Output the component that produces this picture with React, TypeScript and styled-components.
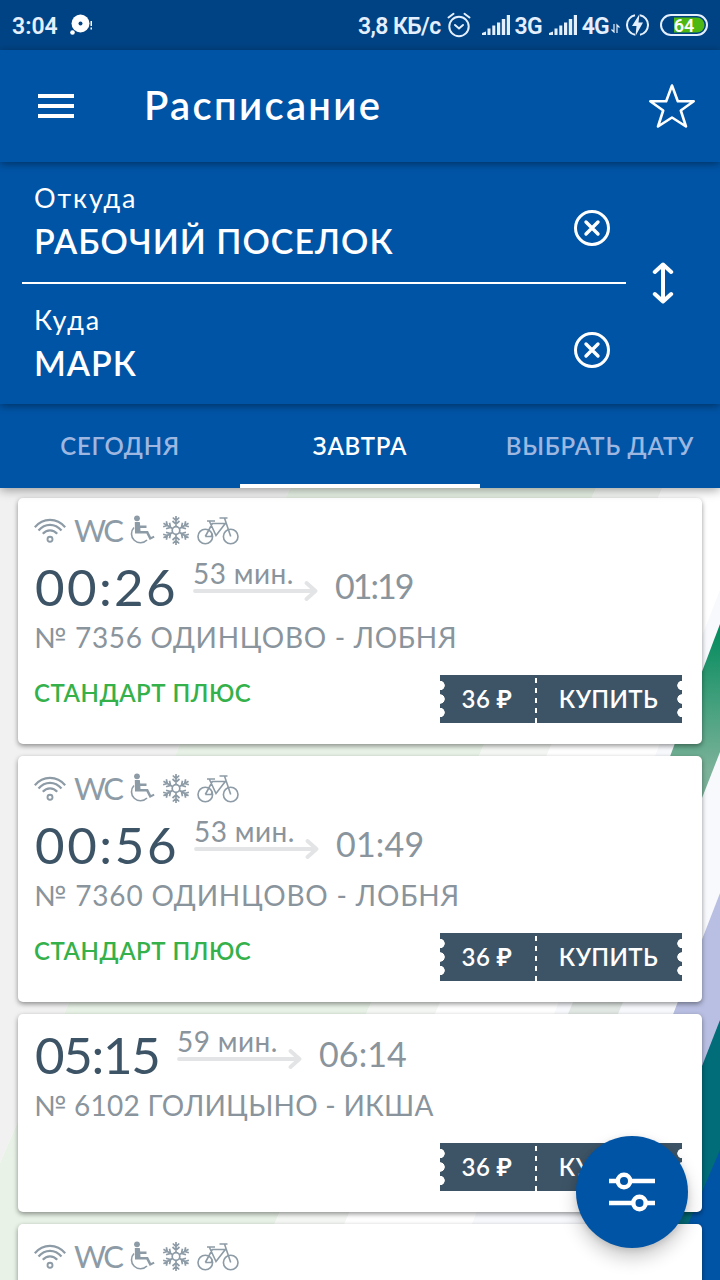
import React from "react";
import styled, { createGlobalStyle } from "styled-components";

const Global = createGlobalStyle`
  * { box-sizing: border-box; }
  html, body, #root { margin: 0; padding: 0; height: 1280px; }
  body { width: 720px; overflow: hidden; font-family: Lato, "Noto Sans", sans-serif; }
`;

const Screen = styled.div`
  position: relative;
  width: 720px;
  height: 1280px;
  display: flex;
  flex-direction: column;
  overflow: hidden;
  background: #fff;
`;

const StatusBar = styled.div`
  flex: none;
  height: 50px;
  padding: 0 12px;
  display: flex;
  align-items: center;
  background: #004384;
  color: #e4efff;
  font: 600 23px/50px Roboto, sans-serif;
  svg { display: block; flex: none; }
`;
const StatusText = styled.span<{ $gap?: number; $ls?: number }>`
  white-space: nowrap;
  padding-top: 3px;
  margin-right: ${(p) => p.$gap ?? 0}px;
  letter-spacing: ${(p) => p.$ls ?? 0}px;
`;
const Spacer = styled.div`flex: 1;`;
const Gap = styled.div<{ $w: number }>`flex: none; width: ${(p) => p.$w}px;`;

const Header = styled.header`
  position: relative;
  z-index: 3;
  flex: none;
  height: 112px;
  padding: 0 24px 0 38px;
  display: flex;
  align-items: center;
  background: #0054a6;
  box-shadow: 0 2px 8px rgba(0, 0, 0, 0.4);
`;
const Title = styled.h1`
  flex: 1;
  margin: -3px 0 0 70px;
  color: #fff;
  font-size: 40px;
  font-weight: 600;
  letter-spacing: 2.3px;
  line-height: 48px;
`;

const Route = styled.section`
  position: relative;
  z-index: 2;
  flex: none;
  height: 242px;
  display: flex;
  background: #0054a6;
  color: #fff;
  box-shadow: 0 2px 8px rgba(0, 0, 0, 0.4);
`;
const Stations = styled.div`
  width: 604px;
  margin-left: 22px;
  display: flex;
  flex-direction: column;
`;
const Station = styled.div<{ $line?: boolean }>`
  height: ${(p) => (p.$line ? 122 : 120)}px;
  padding: 18px 16px 0 12px;
  display: flex;
  justify-content: space-between;
  border-bottom: ${(p) => (p.$line ? "2px solid #fff" : "none")};
  svg { margin-top: 30px; }
`;
const Label = styled.div`
  height: 36px;
  font-size: 27px;
  line-height: 36px;
  letter-spacing: 1.9px;
`;
const StationName = styled.div`
  height: 48px;
  font-size: 34px;
  font-weight: 600;
  line-height: 49px;
  letter-spacing: 1px;
`;
const Swap = styled.div`
  flex: 1;
  display: flex;
  align-items: center;
  padding-left: 26px;
`;

const Tabs = styled.nav`
  position: relative;
  z-index: 1;
  flex: none;
  height: 84px;
  display: grid;
  grid-template-columns: repeat(3, 240px);
  background: #0054a6;
  box-shadow: 0 2px 10px rgba(0, 0, 0, 0.38);
`;
const Tab = styled.div<{ $active?: boolean }>`
  display: flex;
  justify-content: center;
  align-items: center;
  border-bottom: 4px solid ${(p) => (p.$active ? "#fff" : "transparent")};
  padding-top: 3px;
  color: ${(p) => (p.$active ? "#fff" : "#9db7e0")};
  font-size: 24px;
  font-weight: 600;
  white-space: nowrap;
  letter-spacing: 0.75px;
`;

const Content = styled.main`
  position: relative;
  flex: 1;
  min-height: 0;
`;
const Backdrop = styled.svg`
  position: absolute;
  inset: 0;
`;
const List = styled.div`
  position: relative;
  display: flex;
  flex-direction: column;
  gap: 12px;
  padding: 10px 18px 0;
`;
const Card = styled.article<{ $h: number; $plain?: boolean }>`
  flex: none;
  height: ${(p) => p.$h}px;
  padding: ${(p) => (p.$plain ? 10 : 0)}px 20px 0 16px;
  display: flex;
  flex-direction: column;
  border-radius: 5px;
  background: #fff;
  box-shadow: 0 2px 5px rgba(0, 0, 0, 0.42);
`;
const Amenities = styled.div`
  height: 58px;
  padding-top: 15px;
  color: #8d9ba6;
  display: flex;
  align-items: flex-start;
  svg { display: block; flex: none; }
`;
const Wc = styled.span`
  width: 47px;
  margin: 0 8px 0 8px;
  font-size: 31px;
  line-height: 35px;
  letter-spacing: -2.5px;
`;
const Times = styled.div`
  height: 62px;
  display: flex;
  align-items: flex-start;
`;
const Depart = styled.div<{ $w: number; $ls: number }>`
  width: ${(p) => p.$w}px;
  margin-left: 1px;
  color: #3d5466;
  font-size: 51px;
  line-height: 62px;
  letter-spacing: ${(p) => p.$ls}px;
`;
const Duration = styled.div`
  width: 126px;
  color: #8a949c;
  font-size: 28px;
  line-height: 35px;
  letter-spacing: 0.4px;
  white-space: nowrap;
  svg { display: block; margin-top: -10px; }
`;
const Arrive = styled.div<{ $ls: number }>`
  margin-left: 16px;
  color: #8a949c;
  font-size: 34px;
  line-height: 60px;
  letter-spacing: ${(p) => p.$ls}px;
`;
const TrainName = styled.div<{ $ls: number }>`
  height: 40px;
  color: #8a949c;
  font-size: 28px;
  line-height: 38px;
  letter-spacing: ${(p) => p.$ls}px;
  white-space: nowrap;
`;
const CardFooter = styled.div`
  display: flex;
  justify-content: space-between;
  padding-top: 17px;
`;
const Tariff = styled.div`
  color: #35b14b;
  font-size: 24px;
  font-weight: 600;
  line-height: 35px;
  letter-spacing: 0.5px;
`;
const notch = "radial-gradient(circle at";
const Ticket = styled.div`
  width: 242px;
  height: 48px;
  display: flex;
  color: #fff;
  font-size: 24px;
  font-weight: 600;
  line-height: 47px;
  letter-spacing: 0.4px;
  background:
    ${notch} 0 10.5px, #fff 4.4px, transparent 5px),
    ${notch} 0 24px, #fff 4.4px, transparent 5px),
    ${notch} 0 37.5px, #fff 4.4px, transparent 5px),
    ${notch} 242px 10.5px, #fff 4.4px, transparent 5px),
    ${notch} 242px 24px, #fff 4.4px, transparent 5px),
    ${notch} 242px 37.5px, #fff 4.4px, transparent 5px),
    #3d5466;
`;
const Price = styled.div`
  width: 97px;
  padding-right: 3px;
  text-align: center;
  background: repeating-linear-gradient(to bottom, transparent 0 3px, #fff 3px 8px, transparent 8px 10px) right top / 2.5px 48px no-repeat;
`;
const Ruble = styled.span`
  font-size: 26px;
`;
const Buy = styled.div`
  flex: 1;
  padding-right: 2px;
  text-align: center;
`;
const Fab = styled.button`
  position: absolute;
  left: 576px;
  top: 1136px;
  z-index: 4;
  width: 112px;
  height: 112px;
  padding: 0;
  border: 0;
  border-radius: 50%;
  display: grid;
  place-items: center;
  background: #0054a6;
  box-shadow: 0 10px 18px rgba(0, 0, 0, 0.2), 0 2px 6px rgba(0, 0, 0, 0.12);
`;

const Signal = () => (
  <svg width="28" height="20" viewBox="0 0 28 20" fill="currentColor">
    <path d="M0 20v-2l4-1.500V20zM5.500 13.500h3V20h-3zM10.300 10.500h3V20h-3zM15 7.500h3.200V20H15zM19.800 4h3.400v16h-3.400zM24.800 0H28v20h-3.200z" />
  </svg>
);

const Clear = () => (
  <svg width="36" height="36" viewBox="0 0 36 36" fill="none" stroke="#fff" strokeLinecap="round">
    <circle cx="18" cy="18" r="16.500" strokeWidth="3" />
    <path d="M12 12l12 12M24 12L12 24" strokeWidth="3.400" />
  </svg>
);

const AmenityRow = () => (
  <Amenities>
    <svg width="32" height="34" viewBox="0 0 32 34" fill="none" stroke="currentColor" strokeWidth="2.200">
      <path d="M.8 14.200C9 4.300 23 4.300 31.200 14.200M4.500 17.500c6.500-7.500 16.500-7.500 23 0M8.800 20.800c4-4.600 10.400-4.600 14.400 0" />
      <circle cx="16" cy="26.300" r="2.500" strokeWidth="1.900" />
    </svg>
    <Wc>WC</Wc>
    <svg width="26" height="34" viewBox="0 0 26 34" fill="none" stroke="currentColor">
      <circle cx="8" cy="5.300" r="2.900" fill="currentColor" stroke="none" />
      <path d="M5.800 9h5l.4 3.500h6.300v2.400h-6.200l.2 3H19l3 6 2.700-1.200.9 1.800-4.900 2.500-3.300-6.500H6z" fill="currentColor" stroke="none" />
      <path d="M5 14.500a9 9 0 1 0 13 12.500" strokeWidth="1.600" />
    </svg>
    <Gap $w={7} />
    <svg width="28" height="34" viewBox="0 0 28 34" fill="none" stroke="currentColor" strokeWidth="1.700">
      <circle cx="14" cy="17.500" r="3.800" />
      {[0, 60, 120, 180, 240, 300].map((a) => (
        <path key={a} transform={`rotate(${a} 14 17.500)`} d="M14 13.500V3M10.800 4.500L14 7.500l3.200-3M10.500 8L14 11.200 17.500 8" />
      ))}
    </svg>
    <Gap $w={7} />
    <svg width="42" height="34" viewBox="0 0 42 34" fill="none" stroke="currentColor" strokeWidth="1.600">
      <circle cx="8.300" cy="23.500" r="7.300" />
      <circle cx="33.700" cy="23.500" r="7.300" />
      <path d="M8.300 23.500l7-13h13L19 22.500l-6.500-14M10 8h8M8.300 23.500h6l1-3M33.700 23.500L27.500 5H22.500M27.500 5h3" />
    </svg>
  </Amenities>
);

const Arrow = () => (
  <svg width="126" height="20" viewBox="0 0 126 20" fill="none" stroke="#e3e4e5" strokeWidth="3.800" strokeLinecap="round" strokeLinejoin="round">
    <path d="M2 10h120M113.500 2l9 8-9 8" />
  </svg>
);

type Train = {
  h: number;
  from: string;
  fromW: number;
  fromLs: number;
  dur: string;
  to: string;
  toLs: number;
  name: string;
  nameLs: number;
  icons?: boolean;
  tariff?: string;
};
const trains: Train[] = [
  { h: 246, from: "00:26", fromW: 158, fromLs: 2.4, dur: "53 мин.", to: "01:19", toLs: -2, name: "№ 7356 ОДИНЦОВО - ЛОБНЯ", nameLs: 0.7, icons: true, tariff: "СТАНДАРТ ПЛЮС" },
  { h: 246, from: "00:56", fromW: 159, fromLs: 2.6, dur: "53 мин.", to: "01:49", toLs: 0.2, name: "№ 7360 ОДИНЦОВО - ЛОБНЯ", nameLs: 0.82, icons: true, tariff: "СТАНДАРТ ПЛЮС" },
  { h: 198, from: "05:15", fromW: 142, fromLs: -1.3, dur: "59 мин.", to: "06:14", toLs: 0.1, name: "№ 6102 ГОЛИЦЫНО - ИКША", nameLs: 0.25 },
];

export default function App() {
  return (
    <>
      <Global />
      <Screen>
        <StatusBar>
          <StatusText $gap={12}>3:04</StatusText>
          <svg width="24" height="24" viewBox="0 0 24 24" fill="#fff">
            <circle cx="10.500" cy="10.500" r="9" />
            <circle cx="2.500" cy="19.500" r="2.300" />
            <circle cx="10.500" cy="10.500" r="2" fill="#004384" />
            <path d="M20.500 8H22v5h-1.500zM20.500 14.500H22v2h-1.500z" />
          </svg>
          <Spacer />
          <StatusText $gap={6} $ls={-0.6}>3,8 КБ/с</StatusText>
          <svg width="24" height="26" viewBox="0 0 24 26" fill="none" stroke="currentColor" strokeWidth="2" strokeLinecap="round">
            <circle cx="12" cy="14.500" r="9.700" />
            <path d="M8 13l4 3.500 4-3.500M1.500 5.500l5-3.700M22.500 5.500l-5-3.700" />
          </svg>
          <Gap $w={11} />
          <Signal />
          <Gap $w={5} />
          <StatusText $gap={7} $ls={-0.8}>3G</StatusText>
          <Signal />
          <Gap $w={5} />
          <StatusText $gap={2} $ls={-0.8}>4G</StatusText>
          <svg width="9" height="16" viewBox="0 -7 9 16" stroke="currentColor" fill="none" strokeWidth="1.200">
            <path d="M3 0v8L.5 5.500M6 9V1l2.500 2.500" />
          </svg>
          <Gap $w={6} />
          <svg width="23" height="24" viewBox="0 0 23 24" fill="none" stroke="currentColor" strokeWidth="2">
            <path d="M9 2.200a10 10 0 0 0 0 19.600M14 2.200a10 10 0 0 1 0 19.600" />
            <path d="M13.500 1L6 13h4.500l-1 10L17 9.500h-4.500z" fill="currentColor" stroke="none" />
          </svg>
          <Gap $w={11} />
          <svg width="48" height="22" viewBox="0 0 48 22">
            <rect x="1" y="1" width="46" height="20" rx="10" fill="none" stroke="#e4efff" strokeWidth="2" />
            <path d="M14 3.500h23a7.500 7.500 0 0 1 0 15H14z" fill="#4cb811" />
            <text x="24" y="17.500" textAnchor="middle" fontSize="18" fontWeight="600" fill="#fff" fontFamily="Roboto">64</text>
          </svg>
        </StatusBar>
        <Header>
          <svg width="36" height="24" viewBox="0 0 36 24" fill="#fff">
            <path d="M0 0h36v4H0zM0 10h36v4H0zM0 20h36v4H0z" />
          </svg>
          <Title>Расписание</Title>
          <svg width="48" height="46" viewBox="0 0 48 46" fill="none" stroke="#fff" strokeWidth="2.600" strokeLinejoin="round">
            <path d="M24 2.500l5.800 15.700h15.900L32.800 27.500 38 43.500 24 34.500 10 43.500l5.200-16L2.300 18.200h15.900z" />
          </svg>
        </Header>
        <Route>
          <Stations>
            <Station $line>
              <div><Label>Откуда</Label><StationName>РАБОЧИЙ ПОСЕЛОК</StationName></div>
              <Clear />
            </Station>
            <Station>
              <div><Label>Куда</Label><StationName>МАРК</StationName></div>
              <Clear />
            </Station>
          </Stations>
          <Swap>
            <svg width="22" height="42" viewBox="0 0 22 42" fill="none" stroke="#fff" strokeWidth="4" strokeLinecap="round" strokeLinejoin="round">
              <path d="M11 2.500v37M2.800 10L11 2.500l8.200 7.500M2.800 32l8.200 7.500 8.200-7.500" />
            </svg>
          </Swap>
        </Route>
        <Tabs>
          <Tab>СЕГОДНЯ</Tab>
          <Tab $active>ЗАВТРА</Tab>
          <Tab>ВЫБРАТЬ ДАТУ</Tab>
        </Tabs>
        <Content>
          <Backdrop width="720" height="792" viewBox="0 488 720 792">
            <defs>
              <linearGradient id="leaf" x1="0" y1="624" x2="0" y2="770" gradientUnits="userSpaceOnUse">
                <stop offset="0" stopColor="#008a5c" />
                <stop offset="1" stopColor="#7bb299" />
              </linearGradient>
            </defs>
            <path d="M0 488h290L0 1163z" fill="#f1f1f1" />
            <path d="M290 488h306L250 1280H0V1163z" fill="#e8f2e6" />
            <path d="M596 488h66L320 1280h-70z" fill="#f4f7f3" />
            <path d="M720 590V893L677 1002 570 1280H450z" fill="#f8f9fd" />
            <path d="M573 1002h50l-5 12h-50z" fill="#e2e9e5" />
            <path d="M720 624v128L702 798 640 950V836z" fill="url(#leaf)" />
            <path d="M720 893v240H627z" fill="#b8bfe2" />
            <path d="M720 1020v150L690 1240H634z" fill="#006d79" />
            <path d="M720 1150v130H664z" fill="#0054a6" />
          </Backdrop>
          <List>
            {trains.map((t) => (
              <Card key={t.from} $h={t.h} $plain={!t.icons}>
                {t.icons && <AmenityRow />}
                <Times>
                  <Depart $w={t.fromW} $ls={t.fromLs}>{t.from}</Depart>
                  <Duration>{t.dur}<Arrow /></Duration>
                  <Arrive $ls={t.toLs}>{t.to}</Arrive>
                </Times>
                <TrainName $ls={t.nameLs}>{t.name}</TrainName>
                <CardFooter>
                  <Tariff>{t.tariff}</Tariff>
                  <Ticket><Price>36 <Ruble>₽</Ruble></Price><Buy>КУПИТЬ</Buy></Ticket>
                </CardFooter>
              </Card>
            ))}
            <Card $h={198}><AmenityRow /></Card>
          </List>
        </Content>
        <Fab>
          <svg width="46" height="40" viewBox="0 0 46 40" fill="none" stroke="#fff" strokeWidth="4.400">
            <path d="M0 9h9M21 9h25M0 31h24M36 31h10" />
            <circle cx="15" cy="9" r="6.200" />
            <circle cx="30.500" cy="31" r="6.200" />
          </svg>
        </Fab>
      </Screen>
    </>
  );
}
